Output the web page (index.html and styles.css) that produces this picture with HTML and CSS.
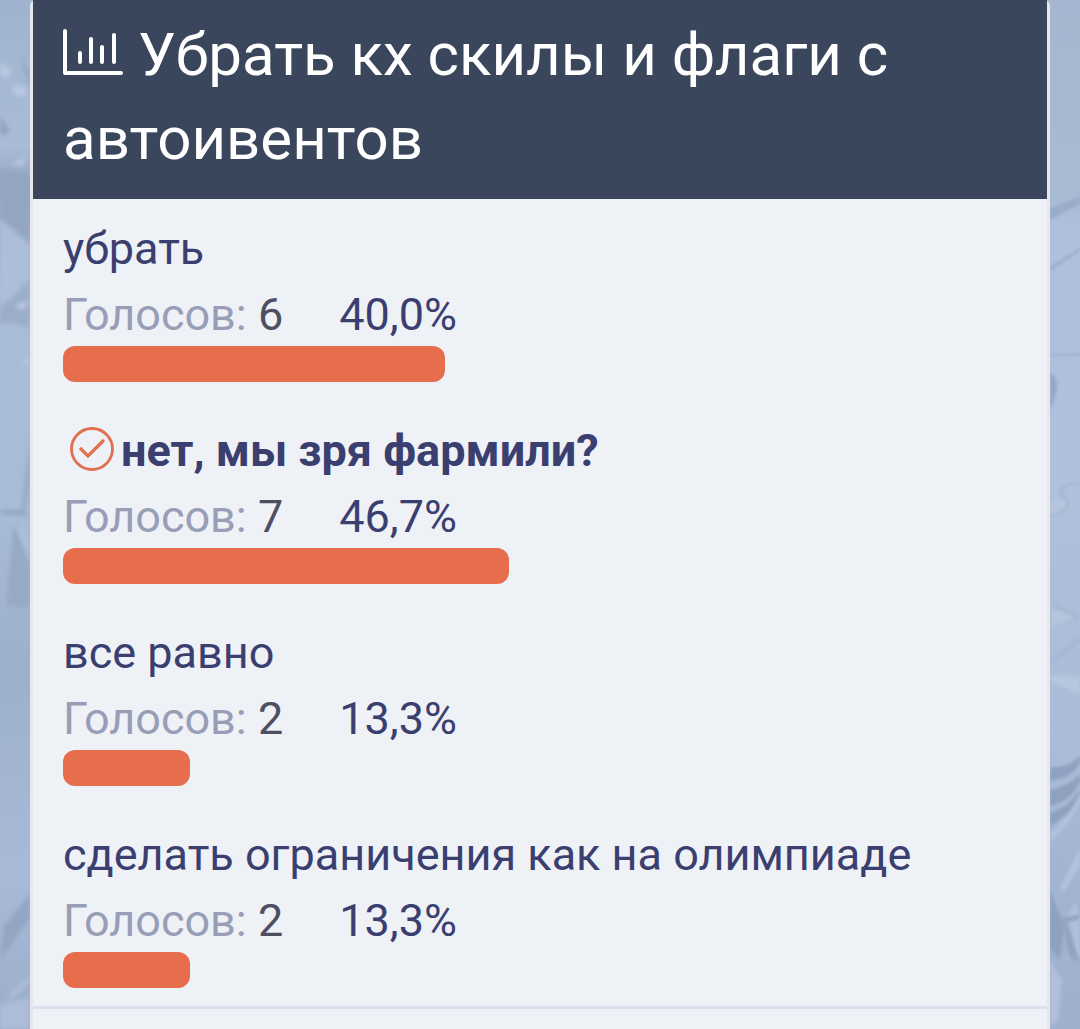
FILE: index.html
```html
<!DOCTYPE html>
<html lang="ru">
<head>
<meta charset="utf-8">
<meta name="viewport" content="width=device-width, initial-scale=1">
<title>Опрос</title>
<link rel="stylesheet" href="styles.css">
</head>
<body>
<div class="page">
  <svg class="scenery" viewBox="0 0 30 1029" preserveAspectRatio="xMidYMin slice" aria-hidden="true">
    <defs>
      <linearGradient id="left-sky" x1="0" y1="0" x2="0" y2="1">
        <stop offset="0" stop-color="#9fb3ce"/>
        <stop offset=".14" stop-color="#a9bbd8"/>
        <stop offset=".18" stop-color="#97a8c2"/>
        <stop offset=".3" stop-color="#a9bcd8"/>
        <stop offset=".5" stop-color="#a8bbd7"/>
        <stop offset=".65" stop-color="#9db0cb"/>
        <stop offset=".85" stop-color="#a8bad8"/>
        <stop offset="1" stop-color="#9badc9"/>
      </linearGradient>
      <filter id="soft-left"><feGaussianBlur stdDeviation="2"/></filter>
    </defs>
    <rect width="30" height="1029" fill="url(#left-sky)"/>
    <g filter="url(#soft-left)">
      <path d="M0 62l12 8-4 8-8-2zM14 84l14 4-4 10-12-4zM12 164l14-8-4 10z" fill="#b8c7df"/>
      <path d="M0 116l10 16-10 4zM20 56l10 18v14z" fill="#8fa2bf"/>
      <path d="M0 168l30 6v68L0 218z" fill="#94a5bf"/>
      <path d="M0 219l30 27v32l-14 8 14 8v16l-30-2z" fill="#adbedb"/>
      <path d="M0 308l30-28v48l-18-5-12 2z" fill="#9badca"/>
      <path d="M14 306l16-6-8 10zM20 361l10-3v5z" fill="#bdcbe0"/>
      <path d="M30 440l-8 70h3l5-30zM0 510h24l6 6-30-2z" fill="#92a6c4"/>
      <path d="M14 525L6 606l24 2v-48z" fill="#97a9c3"/>
      <path d="M18 532l12 32-6-38z" fill="#b0c1dc"/>
      <path d="M30 894L4 926l-4 34 30-42z" fill="#93a5c2"/>
      <path d="M30 974L7 996l4 4 19-18zM0 1004l30-6v31H0z" fill="#acbcd9"/>
    </g>
  </svg>

  <main class="poll">
    <h1 class="poll__title">
      <svg class="poll__icon" viewBox="0 0 60 46" aria-hidden="true">
        <path d="M2 2v42h56" fill="none" stroke="currentColor" stroke-width="4" stroke-linecap="round" stroke-linejoin="round"/>
        <path d="M17 24v9M28 10v23M39 18v15M51 6v27" fill="none" stroke="currentColor" stroke-width="4" stroke-linecap="round"/>
      </svg>
      Убрать кх скилы и флаги с автоивентов
    </h1>
    <ul class="poll__options">
      <li class="option">
        <div class="option__label">убрать</div>
        <div class="option__stats"><span><span class="option__caption">Голосов:</span> 6</span><span class="option__percent">40,0%</span></div>
        <div class="option__bar" style="width: 40%"></div>
      </li>
      <li class="option">
        <div class="option__label option__label--mine">
          <svg class="option__check" viewBox="0 0 44 48" role="img" aria-label="Ваш голос">
            <circle cx="22" cy="22" r="20.5" fill="none" stroke="currentColor" stroke-width="2.8"/>
            <path d="M10 21l8 8 16-16" fill="none" stroke="currentColor" stroke-width="3.2"/>
          </svg>
          нет, мы зря фармили?
        </div>
        <div class="option__stats"><span><span class="option__caption">Голосов:</span> 7</span><span class="option__percent">46,7%</span></div>
        <div class="option__bar" style="width: 46.7%"></div>
      </li>
      <li class="option">
        <div class="option__label">все равно</div>
        <div class="option__stats"><span><span class="option__caption">Голосов:</span> 2</span><span class="option__percent">13,3%</span></div>
        <div class="option__bar" style="width: 13.3%"></div>
      </li>
      <li class="option">
        <div class="option__label">сделать ограничения как на олимпиаде</div>
        <div class="option__stats"><span><span class="option__caption">Голосов:</span> 2</span><span class="option__percent">13,3%</span></div>
        <div class="option__bar" style="width: 13.3%"></div>
      </li>
    </ul>
  </main>

  <svg class="scenery" viewBox="0 0 30 1029" preserveAspectRatio="xMidYMin slice" aria-hidden="true">
    <defs>
      <linearGradient id="right-sky" x1="0" y1="0" x2="0" y2="1">
        <stop offset="0" stop-color="#a5b6d0"/>
        <stop offset=".19" stop-color="#a9bad3"/>
        <stop offset=".22" stop-color="#afc0dc"/>
        <stop offset=".48" stop-color="#b0c1dc"/>
        <stop offset=".55" stop-color="#adbed8"/>
        <stop offset=".72" stop-color="#abbcd8"/>
        <stop offset=".85" stop-color="#a2b4d0"/>
        <stop offset="1" stop-color="#9fb0cd"/>
      </linearGradient>
      <filter id="soft-right"><feGaussianBlur stdDeviation="1.6"/></filter>
    </defs>
    <rect width="30" height="1029" fill="url(#right-sky)"/>
    <g filter="url(#soft-right)">
      <path d="M0 208l30-12v8L0 220zM0 267l30-19v3L0 271z" fill="#9aacca"/>
      <path d="M0 373q7 4 7 12T0 411z" fill="#95a7c4"/>
      <path d="M0 354l30-1v3H0z" fill="#a3b4d0"/>
      <path d="M0 502l18-1-4 9-14 8zM2 608l24 9-24 9z" fill="#b5c5dd"/>
      <path d="M2 604l26 14M0 663l30-24M30 484q-18-2-20 10 12 6 6 14L0 517" fill="none" stroke="#a0b2cf" stroke-width="2"/>
      <path d="M0 682l30 12v-18H0z" fill="#b5c6dd"/>
      <path d="M0 767q20 2 30-12v8Q22 778 0 781zM0 790q20-4 30-16v8Q20 802 0 806zM0 813q20-6 30-24v8Q24 812 0 826z" fill="#8fa1bf"/>
      <path d="M0 834q18-16 30-40v8Q20 824 0 842zM10 888l20-40v18L14 892z" fill="#b2c2dc"/>
      <path d="M0 890l14 36-4 34-10-12z" fill="#8fa1be"/>
      <path d="M18 914l8-12 4 14v44l-14-2 10-8zM0 960l12 20-4 40-8 6z" fill="#b0c0da"/>
      <path d="M12 918l18-4-2 6-12 2 14 40-10-4z" fill="#91a3c0"/>
    </g>
  </svg>
</div>
</body>
</html>
```
FILE: styles.css
```css
* {
  box-sizing: border-box;
}

body {
  margin: 0;
  background: #a5b7d2;
  color: #3a3f70;
  font-family: Roboto, sans-serif;
  font-size: 45px;
}

.page {
  display: grid;
  grid-template-columns: 30px minmax(0, 1fr) 30px;
  min-height: 100vh;
}

.scenery {
  display: block;
  width: 100%;
  height: 100%;
}

.poll {
  border: solid #e6e8ec;
  border-width: 0 3px;
  border-radius: 6px 6px 0 0;
  background: #eef1f6;
}

.poll__title {
  margin: 0;
  padding: 13px 30px 18px;
  background: #3a465b;
  color: #fff;
  font-size: 60px;
  font-weight: 400;
  line-height: 84px;
}

.poll__icon {
  width: 60px;
  height: 46px;
}

.poll__options {
  display: grid;
  gap: 35px;
  margin: 0;
  padding: 16px 30px 18px;
  border-bottom: 3px solid #dae1ec;
  list-style: none;
}

.option__label {
  line-height: 68px;
}

.option__label--mine {
  display: flex;
  align-items: center;
  gap: 7px;
  padding-left: 7px;
  font-weight: 700;
}

.option__check {
  flex: none;
  width: 44px;
  height: 48px;
  color: #e0704f;
}

.option__stats {
  display: flex;
  gap: 56px;
  color: #4e5062;
  line-height: 63px;
}

.option__caption {
  color: #999eb7;
}

.option__percent {
  color: #3a3f70;
}

.option__bar {
  height: 36px;
  border-radius: 12px;
  background: #e76e4c;
}
```
